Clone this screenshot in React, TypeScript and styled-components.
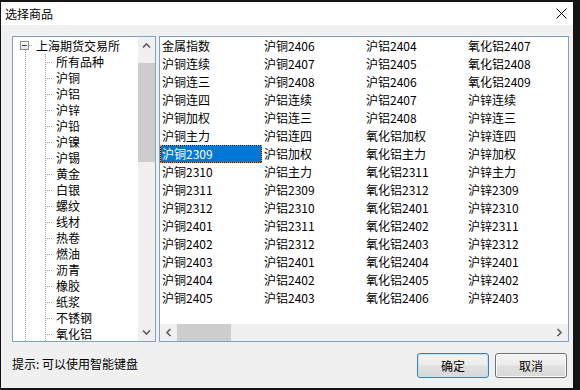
import React from "react";
import styled, { createGlobalStyle } from "styled-components";

const Global = createGlobalStyle`
  html, body { margin: 0; padding: 0; background: #141414; }
  body {
    width: 580px; height: 390px; overflow: hidden;
    font-family: "Noto Sans CJK SC", "Microsoft YaHei", sans-serif;
    color: #000;
  }
`;

const Screen = styled.div`
  width: 580px;
  height: 390px;
  box-sizing: border-box;
  padding: 2px 0 0 1px;
`;

const Window = styled.div`
  width: 572px;
  height: 386px;
  background: #f0f0f0;
  display: flex;
  flex-direction: column;
`;

const TitleBar = styled.div`
  height: 23px;
  flex-shrink: 0;
  background: #fff;
  display: flex;
  align-items: center;
  justify-content: space-between;
  padding: 0 6px 0 4px;
  font-size: 12px;
  line-height: 16px;
`;

const CloseIcon = styled.svg`
  display: block;
`;

const Body = styled.div`
  display: flex;
  gap: 3px;
  padding: 11px 4px 0 11px;
`;

const TreeBox = styled.div`
  width: 144px;
  height: 306px;
  box-sizing: border-box;
  border: 1px solid #82a0bf;
  background: #fff;
  display: flex;
  overflow: hidden;
`;

const TreeBody = styled.div`
  flex: 1;
  padding-top: 1px;
  overflow: hidden;
`;

const TreeRow = styled.div`
  display: flex;
  height: 16px;
  font-size: 12px;
  line-height: 16px;
  white-space: nowrap;
`;

const dotV = (x: number, y: number, h: string) =>
  `repeating-linear-gradient(to bottom, #a0a0a0 0 1px, transparent 1px 2px) ${x}px ${y}px / 1px ${h} no-repeat`;
const dotH = (x: number, y: number, w: number) =>
  `repeating-linear-gradient(to right, #a0a0a0 0 1px, transparent 1px 2px) ${x}px ${y}px / ${w}px 1px no-repeat`;

const GuideCell = styled.div<{ $kind: "pass" | "branch" | "root" }>`
  width: 20px;
  height: 16px;
  flex-shrink: 0;
  box-sizing: border-box;
  display: flex;
  align-items: flex-start;
  padding: 3px 0 0 7px;
  background: ${(p) =>
    p.$kind === "pass"
      ? dotV(12, 0, "100%")
      : p.$kind === "branch"
      ? `${dotV(12, 0, "100%")}, ${dotH(12, 8, 8)}`
      : `${dotV(12, 12, "4px")}, ${dotH(16, 7, 4)}`};
`;

const Expander = styled.span`
  width: 9px;
  height: 9px;
  box-sizing: border-box;
  border: 1px solid #919191;
  background: linear-gradient(#ffffff, #e4e4e4);
  display: flex;
  align-items: center;
  justify-content: center;
`;

const Minus = styled.span`
  width: 5px;
  height: 1px;
  background: #2b3f6a;
`;

const TreeLabel = styled.span`
  margin-left: 3px;
`;

const VScroll = styled.div`
  width: 17px;
  flex-shrink: 0;
  background: #f0f0f0;
  display: flex;
  flex-direction: column;
`;

const HScroll = styled.div`
  height: 17px;
  flex-shrink: 0;
  background: #f0f0f0;
  display: flex;
`;

const ArrowBox = styled.div`
  width: 17px;
  height: 17px;
  flex-shrink: 0;
  display: flex;
  align-items: center;
  justify-content: center;
`;

const VTrack = styled.div`
  flex: 1;
  padding-top: 9px;
`;

const VThumb = styled.div`
  height: 99px;
  background: #cdcdcd;
`;

const HTrack = styled.div`
  flex: 1;
  display: flex;
`;

const HThumb = styled.div`
  width: 54px;
  height: 17px;
  background: #cdcdcd;
`;

const ListBox = styled.div`
  width: 410px;
  height: 306px;
  box-sizing: border-box;
  border: 1px solid #82a0bf;
  background: #fff;
  display: flex;
  flex-direction: column;
`;

const ListGrid = styled.div`
  flex: 1;
  display: grid;
  grid-auto-flow: column;
  grid-template-rows: repeat(15, 18px);
  grid-auto-columns: 102px;
  align-content: start;
  overflow: hidden;
`;

const Cell = styled.div<{ $sel?: boolean }>`
  height: 18px;
  box-sizing: border-box;
  padding: 0 0 0 1px;
  font-size: 12px;
  line-height: 16px;
  white-space: nowrap;
  border: 1px ${(p) => (p.$sel ? "dotted #ff8a2a" : "solid transparent")};
  color: ${(p) => (p.$sel ? "#fff" : "#000")};
  background: ${(p) =>
    p.$sel
      ? "linear-gradient(#0078d7, #0078d7) padding-box, linear-gradient(#1a1a1a, #1a1a1a) border-box"
      : "transparent"};
`;

const Footer = styled.div`
  display: flex;
  align-items: center;
  padding: 11px 6px 0 11px;
  gap: 6px;
`;

const Hint = styled.div`
  flex: 1;
  font-size: 12px;
  line-height: 16px;
  margin-top: -3px;
`;

const Button = styled.button<{ $default?: boolean }>`
  width: 72px;
  height: 25px;
  box-sizing: border-box;
  padding: 0;
  font-family: inherit;
  font-size: 12px;
  line-height: 16px;
  color: #000;
  border-radius: 3px;
  border: 1px solid ${(p) => (p.$default ? "#3c7fb1" : "#707070")};
  box-shadow: inset 0 0 0 1px ${(p) => (p.$default ? "#bfe3f7" : "#fbfbfb")};
  background: linear-gradient(#f4f4f4 0%, #ececec 48%, #e0e0e0 52%, #d8d8d8 100%);
`;

const Chevron = ({ dir }: { dir: "up" | "down" | "left" | "right" }) => {
  const rot = { up: 0, right: 90, down: 180, left: 270 }[dir];
  return (
    <svg width="9" height="9" viewBox="0 0 9 9">
      <path
        d="M1 6.5 L4.5 3 L8 6.5"
        fill="none"
        stroke="#606060"
        strokeWidth="1.7"
        transform={`rotate(${rot} 4.5 4.5)`}
      />
    </svg>
  );
};

const treeChildren = [
  "所有品种", "沪铜", "沪铝", "沪锌", "沪铅", "沪镍", "沪锡", "黄金", "白银",
  "螺纹", "线材", "热卷", "燃油", "沥青", "橡胶", "纸浆", "不锈钢", "氧化铝",
];

const columns: string[][] = [
  ["金属指数", "沪铜连续", "沪铜连三", "沪铜连四", "沪铜加权", "沪铜主力", "沪铜2309", "沪铜2310", "沪铜2311", "沪铜2312", "沪铜2401", "沪铜2402", "沪铜2403", "沪铜2404", "沪铜2405"],
  ["沪铜2406", "沪铜2407", "沪铜2408", "沪铝连续", "沪铝连三", "沪铝连四", "沪铝加权", "沪铝主力", "沪铝2309", "沪铝2310", "沪铝2311", "沪铝2312", "沪铝2401", "沪铝2402", "沪铝2403"],
  ["沪铝2404", "沪铝2405", "沪铝2406", "沪铝2407", "沪铝2408", "氧化铝加权", "氧化铝主力", "氧化铝2311", "氧化铝2312", "氧化铝2401", "氧化铝2402", "氧化铝2403", "氧化铝2404", "氧化铝2405", "氧化铝2406"],
  ["氧化铝2407", "氧化铝2408", "氧化铝2409", "沪锌连续", "沪锌连三", "沪锌连四", "沪锌加权", "沪锌主力", "沪锌2309", "沪锌2310", "沪锌2311", "沪锌2312", "沪锌2401", "沪锌2402", "沪锌2403"],
];

export default function App() {
  return (
    <>
      <Global />
      <Screen>
        <Window>
          <TitleBar>
            <span>选择商品</span>
            <CloseIcon width="11" height="11" viewBox="0 0 11 11">
              <path d="M0.5 0.5 L10.5 10.5 M10.5 0.5 L0.5 10.5" stroke="#000" strokeWidth="1" fill="none" />
            </CloseIcon>
          </TitleBar>
          <Body>
            <TreeBox>
              <TreeBody>
                <TreeRow>
                  <GuideCell $kind="root">
                    <Expander>
                      <Minus />
                    </Expander>
                  </GuideCell>
                  <TreeLabel>上海期货交易所</TreeLabel>
                </TreeRow>
                {treeChildren.map((c) => (
                  <TreeRow key={c}>
                    <GuideCell $kind="pass" />
                    <GuideCell $kind="branch" />
                    <TreeLabel>{c}</TreeLabel>
                  </TreeRow>
                ))}
              </TreeBody>
              <VScroll>
                <ArrowBox>
                  <Chevron dir="up" />
                </ArrowBox>
                <VTrack>
                  <VThumb />
                </VTrack>
                <ArrowBox>
                  <Chevron dir="down" />
                </ArrowBox>
              </VScroll>
            </TreeBox>
            <ListBox>
              <ListGrid>
                {columns.flat().map((t) => (
                  <Cell key={t} $sel={t === "沪铜2309"}>
                    {t}
                  </Cell>
                ))}
              </ListGrid>
              <HScroll>
                <ArrowBox>
                  <Chevron dir="left" />
                </ArrowBox>
                <HTrack>
                  <HThumb />
                </HTrack>
                <ArrowBox>
                  <Chevron dir="right" />
                </ArrowBox>
              </HScroll>
            </ListBox>
          </Body>
          <Footer>
            <Hint>提示: 可以使用智能键盘</Hint>
            <Button $default>确定</Button>
            <Button>取消</Button>
          </Footer>
        </Window>
      </Screen>
    </>
  );
}
